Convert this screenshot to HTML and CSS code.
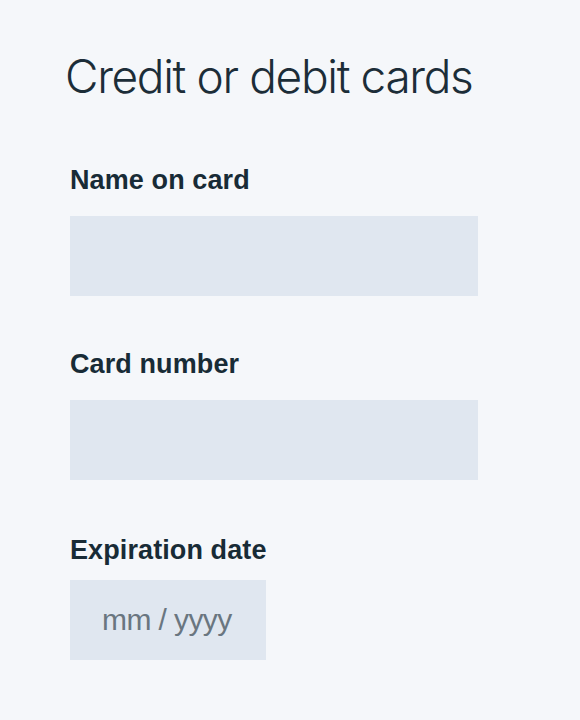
FILE: index.html
```html
<!DOCTYPE html>
<html lang="en">
<head>
<meta charset="utf-8">
<title>Credit or debit cards</title>
<link rel="stylesheet" href="styles.css">
</head>
<body>
<main class="card-form">
  <h1 class="title">Credit or debit cards</h1>
  <div class="field field-name">
    <label class="label" for="name">Name on card</label>
    <input class="input" id="name" type="text">
  </div>
  <div class="field">
    <label class="label" for="number">Card number</label>
    <input class="input" id="number" type="text">
  </div>
  <div class="field field-exp">
    <label class="label" for="exp">Expiration date</label>
    <input class="input input-exp" id="exp" type="text" placeholder="mm / yyyy">
  </div>
</main>
</body>
</html>
```
FILE: styles.css
```css
html, body {
  margin: 0;
  padding: 0;
  background: #f5f7fa;
}
body {
  font-family: "Liberation Sans", Arial, sans-serif;
  color: #182b36;
}
.card-form {
  display: flex;
  flex-direction: column;
  padding: 0 0 0 70px;
}
.title {
  margin: 48px 0 0 -5px;
  font-family: Inter, "Liberation Sans", sans-serif;
  font-size: 46px;
  line-height: 56px;
  font-weight: 300;
  color: #1c2d38;
  letter-spacing: -1.35px;
}
.field {
  display: flex;
  flex-direction: column;
}
.label {
  font-size: 27px;
  line-height: 30px;
  font-weight: 700;
  letter-spacing: 0.1px;
  margin-top: 53px;
  margin-bottom: 21px;
}
.field-name .label {
  margin-top: 61px;
}
.input {
  box-sizing: border-box;
  width: 408px;
  height: 80px;
  border: 0;
  margin: 0;
  padding: 0 32px;
  background: #e0e7f0;
  font-family: "Liberation Sans", Arial, sans-serif;
  font-size: 30px;
  letter-spacing: -0.6px;
  color: #182b36;
  outline: none;
}
.field-exp .label {
  margin-top: 55px;
  margin-bottom: 15px;
}
.input-exp {
  width: 196px;
}
.input-exp::placeholder {
  color: #6a7680;
  opacity: 1;
}
```
